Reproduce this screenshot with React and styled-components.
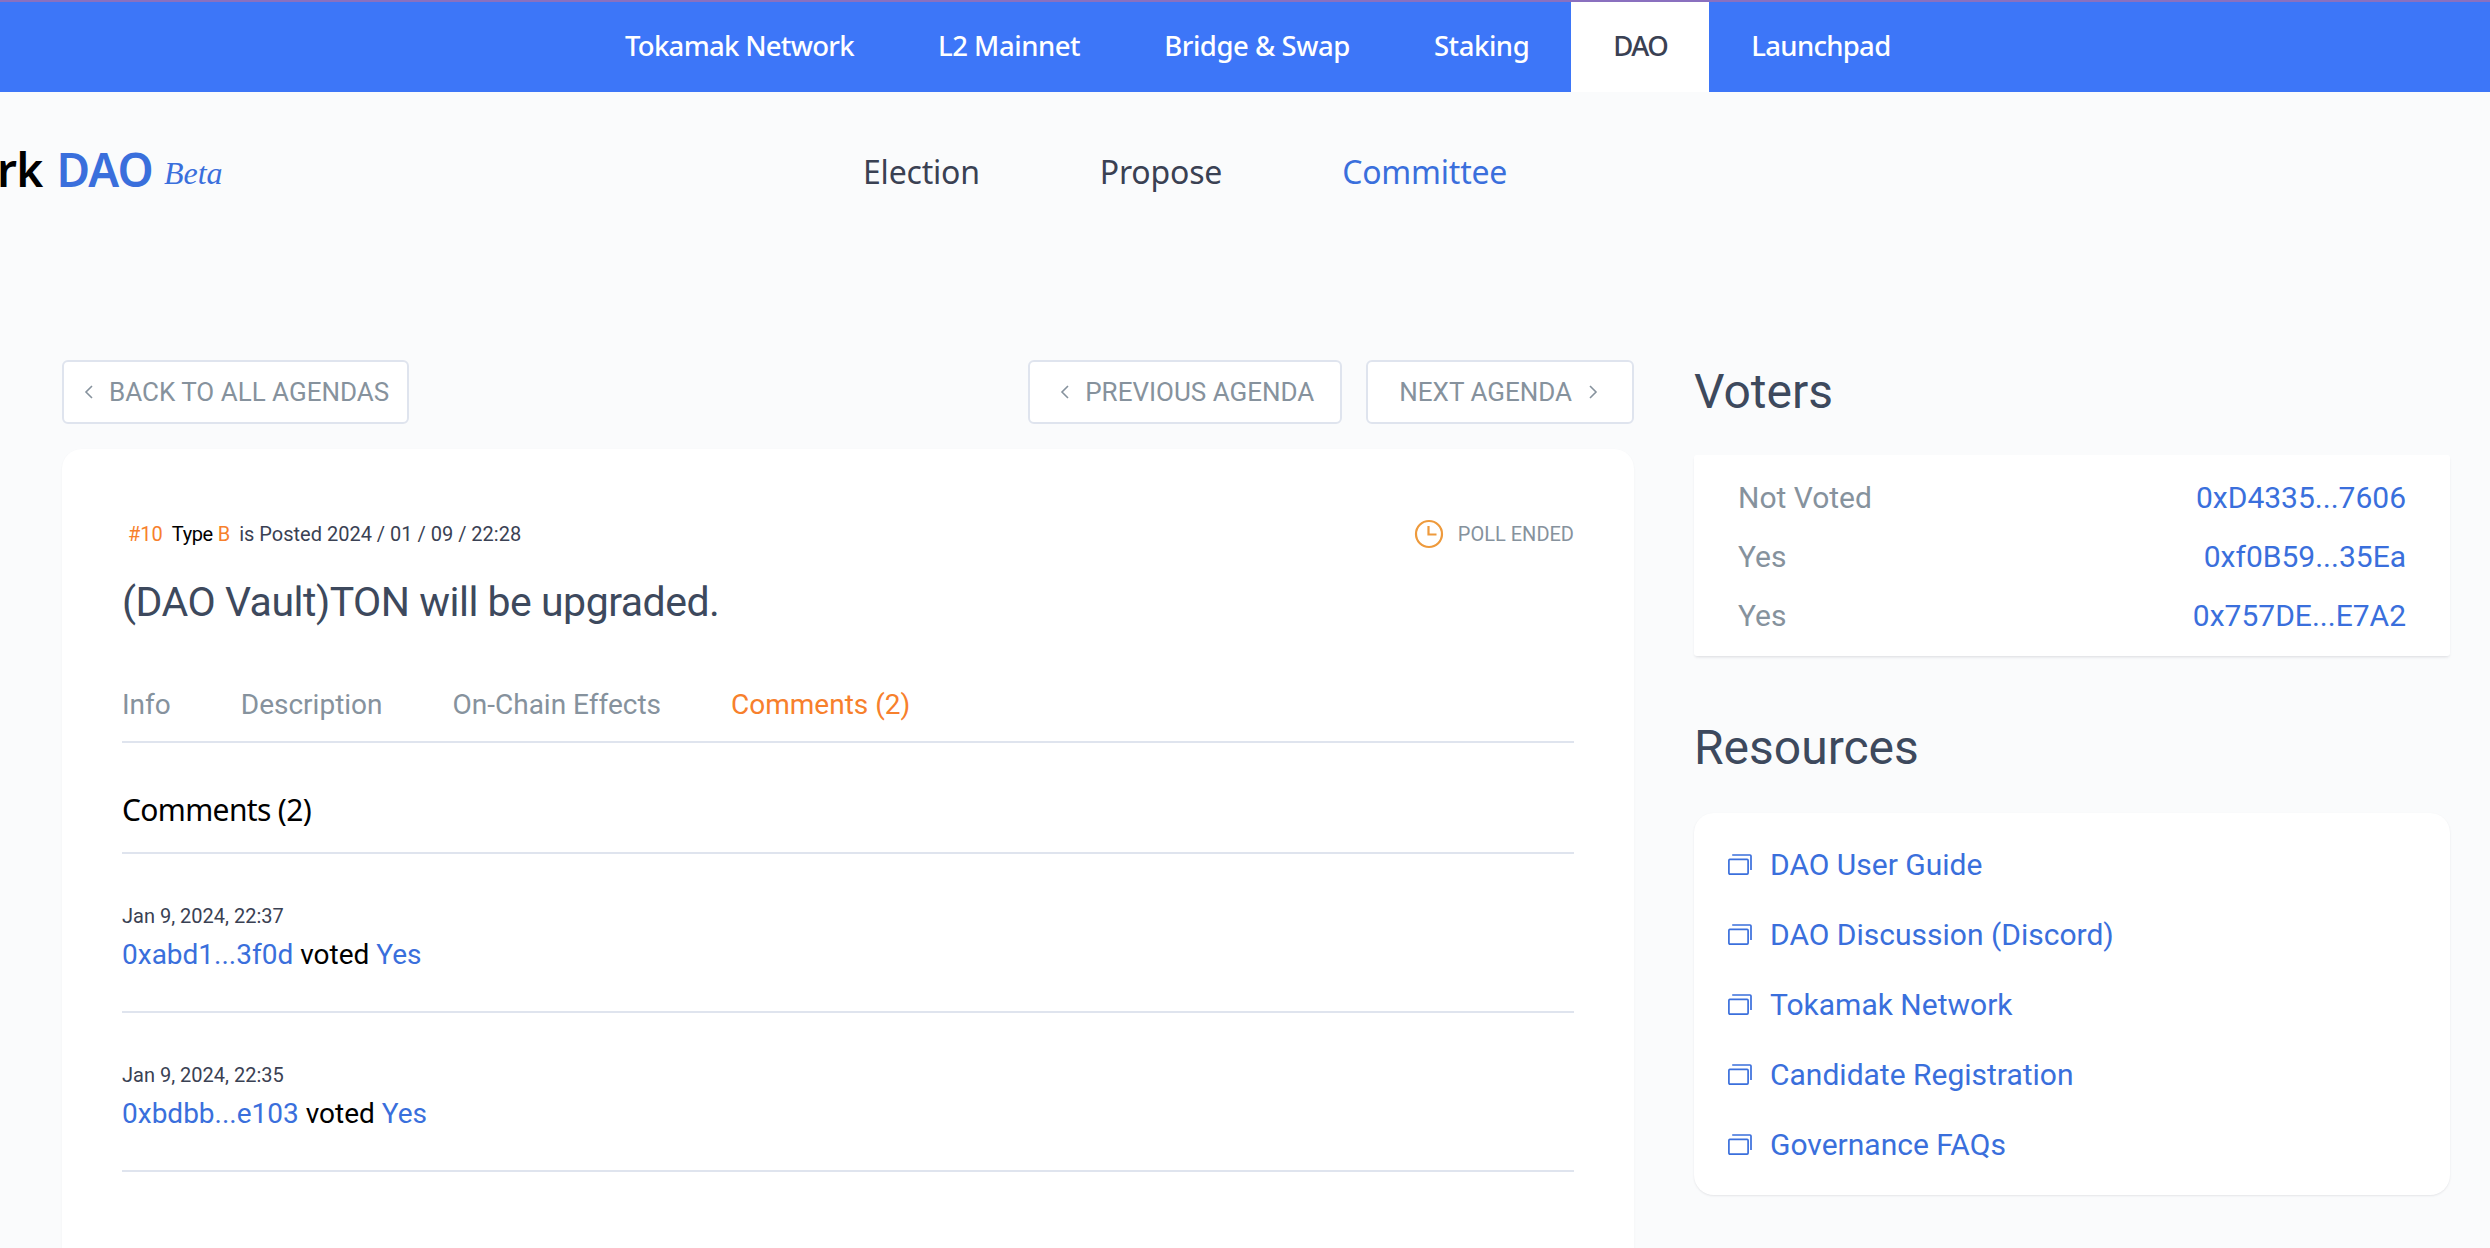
import React from 'react';
import styled, { createGlobalStyle } from 'styled-components';

const GlobalStyle = createGlobalStyle`
  html, body {
    margin: 0;
    height: 100%;
    overflow: hidden;
    background: #fafbfc;
    font-family: Roboto, "Liberation Sans", sans-serif;
  }
  * { box-sizing: border-box; }
`;

const Page = styled.div`
  width: 2490px;
  height: 1248px;
  overflow: hidden;
  background: #fafbfc;
`;

const TopBar = styled.nav`
  height: 92px;
  background: #3d76f8;
  border-top: 2px solid #8a70bf;
  display: flex;
  padding-left: 583px;
`;

const TopLink = styled.a`
  display: flex;
  align-items: center;
  height: 90px;
  padding: 0 42px 3px;
  font-family: "Noto Sans", sans-serif;
  font-size: 27.5px;
  font-weight: 500;
  letter-spacing: ${(p) => p.$spacing}px;
  color: ${(p) => (p.$active ? '#3a4153' : '#fff')};
  background: ${(p) => (p.$active ? '#fff' : 'transparent')};
  white-space: nowrap;
`;

const HeaderRow = styled.header`
  height: 268px;
  display: flex;
  align-items: flex-start;
  padding-top: 46px;
`;

const Logo = styled.div`
  width: 863px;
  display: flex;
  align-items: baseline;
  font-family: "Noto Sans", sans-serif;
  font-size: 46px;
  font-weight: 600;
  color: #000;
  white-space: nowrap;
  letter-spacing: -0.8px;
`;

const LogoClip = styled.span`
  margin-left: -3px;
`;

const LogoDao = styled.span`
  color: #3a6fdc;
  margin-left: 14px;
`;

const LogoBeta = styled.span`
  align-self: flex-start;
  margin: 17px 0 0 11px;
  font-family: "Liberation Serif", serif;
  font-style: italic;
  font-weight: 400;
  font-size: 32px;
  letter-spacing: 0;
  color: #3a6fdc;
`;

const SubNav = styled.div`
  display: flex;
  gap: 120px;
  margin-top: 12px;
`;

const SubLink = styled.a`
  font-family: "Noto Sans", sans-serif;
  font-size: 32px;
  letter-spacing: -0.2px;
  color: ${(p) => (p.$active ? '#3a6fdc' : '#3a4153')};
`;

const Main = styled.main`
  display: flex;
  padding-left: 62px;
  gap: 60px;
  align-items: flex-start;
`;

const LeftCol = styled.section`
  width: 1572px;
`;

const ButtonRow = styled.div`
  display: flex;
  height: 64px;
  gap: 24px;
`;

const NavButton = styled.button`
  height: 64px;
  display: flex;
  align-items: center;
  gap: ${(p) => p.$gap}px;
  padding: 0 ${(p) => p.$padRight}px 0 ${(p) => p.$padLeft}px;
  margin-left: ${(p) => (p.$push ? 'auto' : '0')};
  background: #fff;
  border: 2px solid #dfe4ee;
  border-radius: 6px;
  color: #86929d;
  font-family: Roboto, sans-serif;
  font-size: 26px;
  white-space: nowrap;
`;

const Card = styled.article`
  margin-top: 25px;
  height: 900px;
  background: #fff;
  border-radius: 20px;
  box-shadow: 0 1px 2px rgba(96, 97, 112, 0.08);
  padding: 65px 60px 0;
`;

const MetaRow = styled.div`
  display: flex;
  justify-content: space-between;
  align-items: center;
  height: 40px;
`;

const Meta = styled.div`
  display: flex;
  font-size: 20px;
  color: #3a4153;
  gap: 9px;
  padding-left: 6px;
`;

const Orange = styled.span`
  color: #f7802c;
`;

const TypeText = styled.span`
  color: #000;
  letter-spacing: -0.4px;
`;

const PollStatus = styled.div`
  display: flex;
  align-items: center;
  gap: 14px;
  font-size: 20px;
  color: #86929d;
`;

const Title = styled.h1`
  margin: 20px 0 0;
  font-size: 41px;
  line-height: 56px;
  font-weight: 400;
  letter-spacing: -0.5px;
  color: #3d495d;
`;

const Tabs = styled.div`
  display: flex;
  gap: 70px;
  margin-top: 55px;
  height: 58px;
  border-bottom: 2px solid #dfe4ee;
`;

const Tab = styled.a`
  font-size: 28px;
  line-height: 40px;
  color: ${(p) => (p.$active ? '#f7802c' : '#86929d')};
`;

const CommentsHead = styled.h2`
  margin: 0;
  height: 111px;
  padding-top: 47px;
  font-family: "Noto Sans", sans-serif;
  font-weight: 400;
  font-size: 30px;
  line-height: 40px;
  letter-spacing: -0.65px;
  color: #000;
  border-bottom: 2px solid #dfe4ee;
`;

const Comment = styled.div`
  height: 159px;
  padding-top: 50px;
  border-bottom: 2px solid #dfe4ee;
`;

const CommentDate = styled.div`
  font-size: 20px;
  line-height: 24px;
  color: #3a4153;
`;

const CommentLine = styled.div`
  margin-top: 8px;
  font-size: 28px;
  line-height: 38px;
  color: #000;
`;

const Blue = styled.a`
  color: #3a6fdc;
`;

const RightCol = styled.aside`
  width: 756px;
`;

const SideTitle = styled.h2`
  margin: 0;
  font-size: 48px;
  line-height: 64px;
  font-weight: 400;
  color: #3d495d;
`;

const VoterCard = styled.div`
  margin-top: 31px;
  height: 201px;
  padding: 13px 44px;
  background: #fff;
  border-radius: 3px;
  box-shadow: 0 2px 3px -1px rgba(96, 97, 112, 0.2);
`;

const VoterRow = styled.div`
  display: flex;
  justify-content: space-between;
  height: 59px;
  align-items: center;
  font-size: 30px;
`;

const VoteLabel = styled.span`
  color: #86929d;
`;

const ResourcesTitle = styled(SideTitle)`
  margin-top: 60px;
`;

const ResourceCard = styled.div`
  margin-top: 33px;
  height: 382px;
  padding: 16px 34px;
  background: #fff;
  border-radius: 20px;
  box-shadow: 0 1px 2px rgba(96, 97, 112, 0.14);
`;

const ResourceRow = styled.a`
  display: flex;
  align-items: center;
  gap: 18px;
  height: 70px;
  font-size: 30px;
  color: #3a6fdc;
`;

const Chevron = ({ dir }) => (
  <svg width="10" height="16" viewBox="0 0 10 16" fill="none" stroke="#86929d" strokeWidth="1.6">
    <path d={dir === 'left' ? 'M8 2 2 8l6 6' : 'M2 2l6 6-6 6'} />
  </svg>
);

const ClockIcon = () => (
  <svg width="30" height="30" viewBox="0 0 30 30" fill="none" stroke="#ee9a3c" strokeWidth="2.2">
    <circle cx="15" cy="15" r="13" />
    <path d="M14.5 7v8.5h8" />
  </svg>
);

const WindowsIcon = () => (
  <svg width="24" height="21" viewBox="0 0 24 21" fill="none" stroke="#3a6fdc" strokeWidth="1.7">
    <rect x="0.9" y="5.4" width="19.2" height="14.7" rx="1" />
    <path d="M4.2 1h17.8a1 1 0 0 1 1 1v14" />
  </svg>
);

const voters = [
  ['Not Voted', '0xD4335...7606'],
  ['Yes', '0xf0B59...35Ea'],
  ['Yes', '0x757DE...E7A2'],
];

const resources = [
  'DAO User Guide',
  'DAO Discussion (Discord)',
  'Tokamak Network',
  'Candidate Registration',
  'Governance FAQs',
];

const comments = [
  ['Jan 9, 2024, 22:37', '0xabd1...3f0d'],
  ['Jan 9, 2024, 22:35', '0xbdbb...e103'],
];

export default function App() {
  return (
    <Page>
      <GlobalStyle />
      <TopBar>
        <TopLink $spacing={-0.7}>Tokamak Network</TopLink>
        <TopLink $spacing={-0.45}>L2 Mainnet</TopLink>
        <TopLink $spacing={-0.45}>Bridge &amp; Swap</TopLink>
        <TopLink $spacing={-0.45}>Staking</TopLink>
        <TopLink $spacing={-1.5} $active>DAO</TopLink>
        <TopLink $spacing={-0.7}>Launchpad</TopLink>
      </TopBar>

      <HeaderRow>
        <Logo>
          <LogoClip>rk</LogoClip>
          <LogoDao>DAO</LogoDao>
          <LogoBeta>Beta</LogoBeta>
        </Logo>
        <SubNav>
          <SubLink>Election</SubLink>
          <SubLink>Propose</SubLink>
          <SubLink $active>Committee</SubLink>
        </SubNav>
      </HeaderRow>

      <Main>
        <LeftCol>
          <ButtonRow>
            <NavButton $gap={15} $padLeft={20} $padRight={18}>
              <Chevron dir="left" />
              BACK TO ALL AGENDAS
            </NavButton>
            <NavButton $push $gap={15} $padLeft={30} $padRight={26}>
              <Chevron dir="left" />
              PREVIOUS AGENDA
            </NavButton>
            <NavButton $gap={16} $padLeft={31} $padRight={34}>
              NEXT AGENDA
              <Chevron dir="right" />
            </NavButton>
          </ButtonRow>

          <Card>
            <MetaRow>
              <Meta>
                <Orange>#10</Orange>
                <span>
                  <TypeText>Type</TypeText> <Orange>B</Orange>
                </span>
                <span>is Posted 2024 / 01 / 09 / 22:28</span>
              </Meta>
              <PollStatus>
                <ClockIcon />
                POLL ENDED
              </PollStatus>
            </MetaRow>
            <Title>(DAO Vault)TON will be upgraded.</Title>
            <Tabs>
              <Tab>Info</Tab>
              <Tab>Description</Tab>
              <Tab>On-Chain Effects</Tab>
              <Tab $active>Comments (2)</Tab>
            </Tabs>
            <CommentsHead>Comments (2)</CommentsHead>
            {comments.map(([date, addr]) => (
              <Comment key={date}>
                <CommentDate>{date}</CommentDate>
                <CommentLine>
                  <Blue>{addr}</Blue> voted <Blue>Yes</Blue>
                </CommentLine>
              </Comment>
            ))}
          </Card>
        </LeftCol>

        <RightCol>
          <SideTitle>Voters</SideTitle>
          <VoterCard>
            {voters.map(([label, addr]) => (
              <VoterRow key={addr}>
                <VoteLabel>{label}</VoteLabel>
                <Blue>{addr}</Blue>
              </VoterRow>
            ))}
          </VoterCard>
          <ResourcesTitle>Resources</ResourcesTitle>
          <ResourceCard>
            {resources.map((name) => (
              <ResourceRow key={name}>
                <WindowsIcon />
                {name}
              </ResourceRow>
            ))}
          </ResourceCard>
        </RightCol>
      </Main>
    </Page>
  );
}
